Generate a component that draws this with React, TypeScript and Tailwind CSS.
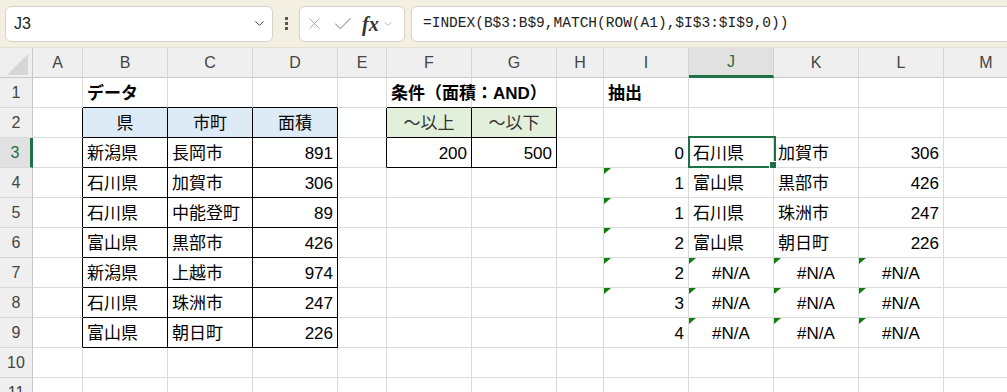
import { X, Check, ChevronDown } from 'lucide-react'

type Align = 'l' | 'r' | 'c'
interface CellData {
  v: string
  a?: Align
  bold?: boolean
  bg?: string
  tri?: boolean
  color?: string
}

const cols = ['A', 'B', 'C', 'D', 'E', 'F', 'G', 'H', 'I', 'J', 'K', 'L', 'M']

// データ表 + 条件表 の中身
const data: Record<string, CellData> = {
  B1: { v: 'データ', bold: true },
  F1: { v: '条件（面積：AND）', bold: true },
  I1: { v: '抽出', bold: true },
  B2: { v: '県', a: 'c', bg: 'bg-[#ddebf7]' },
  C2: { v: '市町', a: 'c', bg: 'bg-[#ddebf7]' },
  D2: { v: '面積', a: 'c', bg: 'bg-[#ddebf7]' },
  F2: { v: '～以上', a: 'c', bg: 'bg-[#e2efda]', color: 'text-[#333]' },
  G2: { v: '～以下', a: 'c', bg: 'bg-[#e2efda]', color: 'text-[#333]' },
  F3: { v: '200', a: 'r' },
  G3: { v: '500', a: 'r' },
}

const src = [
  ['新潟県', '長岡市', '891'],
  ['石川県', '加賀市', '306'],
  ['石川県', '中能登町', '89'],
  ['富山県', '黒部市', '426'],
  ['新潟県', '上越市', '974'],
  ['石川県', '珠洲市', '247'],
  ['富山県', '朝日町', '226'],
]
src.forEach((row, i) => {
  const r = i + 3
  data['B' + r] = { v: row[0] }
  data['C' + r] = { v: row[1] }
  data['D' + r] = { v: row[2], a: 'r' }
})

const idx = ['0', '1', '1', '2', '2', '3', '4']
const found = [
  ['石川県', '加賀市', '306'],
  ['富山県', '黒部市', '426'],
  ['石川県', '珠洲市', '247'],
  ['富山県', '朝日町', '226'],
]
idx.forEach((n, i) => {
  const r = i + 3
  data['I' + r] = { v: n, a: 'r', tri: r >= 4 && r <= 8 }
  const f = found[i]
  if (f) {
    data['J' + r] = { v: f[0] }
    data['K' + r] = { v: f[1] }
    data['L' + r] = { v: f[2], a: 'r' }
  } else {
    ;['J', 'K', 'L'].forEach((c) => {
      data[c + r] = { v: '#N/A', a: 'c', tri: true }
    })
  }
})

function inBox(r: number, ci: number) {
  // B2:D9 と F2:G3 は黒罫線
  if (r >= 2 && r <= 9 && ci >= 1 && ci <= 3) return true
  if (r >= 2 && r <= 3 && ci >= 5 && ci <= 6) return true
  return false
}

const alignCls: Record<Align, string> = {
  l: 'justify-start pl-[4px]',
  r: 'justify-end pr-[4px]',
  c: 'justify-center',
}

function Cell({ r, ci }: { r: number; ci: number }) {
  const key = cols[ci] + r
  const d = data[key]
  const right = inBox(r, ci) || inBox(r, ci + 1) ? 'border-r-black' : 'border-r-[#dadada]'
  const bottom = inBox(r, ci) || inBox(r + 1, ci) ? 'border-b-black' : 'border-b-[#dadada]'
  return (
    <div
      className={`relative flex items-center h-[30px] pt-[2px] border-r border-b whitespace-nowrap text-[17px] ${right} ${bottom} ${d?.bg ?? ''} ${alignCls[d?.a ?? 'l']} ${d?.bold ? 'font-bold' : ''} ${d?.color ?? 'text-black'}`}
    >
      {d?.tri && (
        <span className="absolute left-0 top-0 w-0 h-0 border-t-[6px] border-r-[7px] border-t-[#107c10] border-r-transparent" />
      )}
      {d?.v}
      {key === 'J3' && (
        <span className="absolute z-10 left-[-1px] top-[-2px] w-[88px] h-[32px] border-2 border-[#1e7145]">
          <span className="absolute left-[80px] top-[24px] w-[6px] h-[6px] bg-[#1e7145] outline outline-1 outline-white" />
        </span>
      )}
    </div>
  )
}

export default function App() {
  const rows = Array.from({ length: 11 }, (_, i) => i + 1)
  return (
    <div className="w-[1007px] h-[392px] overflow-hidden bg-white font-['Liberation_Sans','Noto_Sans_CJK_JP',sans-serif]">
      {/* 名前ボックス + 数式バー */}
      <div className="flex items-center h-[48px] bg-[#f3efe1] pl-[5px] border-b border-[#e4e0d2]">
        <div className="flex items-center justify-between w-[268px] h-[36px] bg-white rounded-[6px] border border-[#d6d3c8] pl-[8px] pr-[5px]">
          <span className="text-[16px] text-[#222]">J3</span>
          <ChevronDown size={15} strokeWidth={1.6} className="text-[#444]" />
        </div>
        <div className="flex flex-col items-center justify-center gap-[2px] w-[26px]">
          <span className="w-[3px] h-[3px] bg-[#555]" />
          <span className="w-[3px] h-[3px] bg-[#555]" />
          <span className="w-[3px] h-[3px] bg-[#555]" />
        </div>
        <div className="flex items-center w-[106px] h-[36px] bg-white rounded-[6px] border border-[#d6d3c8] pl-[5px]">
          <X size={19} strokeWidth={1.2} className="text-[#a6a6a6]" />
          <Check size={22} strokeWidth={1.2} className="ml-[8px] text-[#a6a6a6]" />
          <span className="ml-[8px] font-['Liberation_Serif',serif] italic font-bold text-[20px] text-[#333]">fx</span>
          <ChevronDown size={12} strokeWidth={1.5} className="ml-[3px] text-[#999]" />
        </div>
        <div className="flex items-center flex-1 h-[36px] ml-[6px] -mr-[10px] bg-white rounded-[6px] border border-[#d6d3c8] pl-[11px]">
          <span className="font-['Liberation_Mono',monospace] text-[14.5px] text-[#222]">
            =INDEX(B$3:B$9,MATCH(ROW(A1),$I$3:$I$9,0))
          </span>
        </div>
      </div>

      {/* シート */}
      <div className="grid grid-cols-[33px_50px_85px_85px_85px_49px_85px_85px_47px_85px_85px_85px_85px_85px] w-[1114px]">
        <div className="relative h-[30px] bg-[#efefef] border-r border-b border-[#c8c8c8]">
          <svg className="absolute left-[7px] top-[6px]" width="21" height="21" viewBox="0 0 21 21">
            <polygon points="21,0 21,21 0,21" fill="#d6d6d6" />
          </svg>
        </div>
        {cols.map((c) => (
          <div
            key={c}
            className={`flex items-center justify-center h-[30px] text-[16px] border-r ${
              c === 'J'
                ? 'bg-[#e1e1e1] text-[#1e6e42] border-b-[3px] border-b-[#1e7145] border-r-[#d0d0d0]'
                : 'bg-[#efefef] text-[#444] border-b border-b-[#c8c8c8] border-r-[#d6d6d6]'
            }`}
          >
            {c}
          </div>
        ))}
        {rows.map((r) => (
          <div key={r} className="contents">
            <div
              className={`flex items-center justify-center h-[30px] text-[16px] border-b border-b-[#d6d6d6] ${
                r === 3
                  ? 'bg-[#e1e1e1] text-[#1e6e42] border-r-[3px] border-r-[#1e7145]'
                  : 'bg-[#efefef] text-[#444] border-r border-r-[#c8c8c8]'
              }`}
            >
              {r}
            </div>
            {cols.map((c, ci) => (
              <Cell key={c} r={r} ci={ci} />
            ))}
          </div>
        ))}
      </div>
    </div>
  )
}
